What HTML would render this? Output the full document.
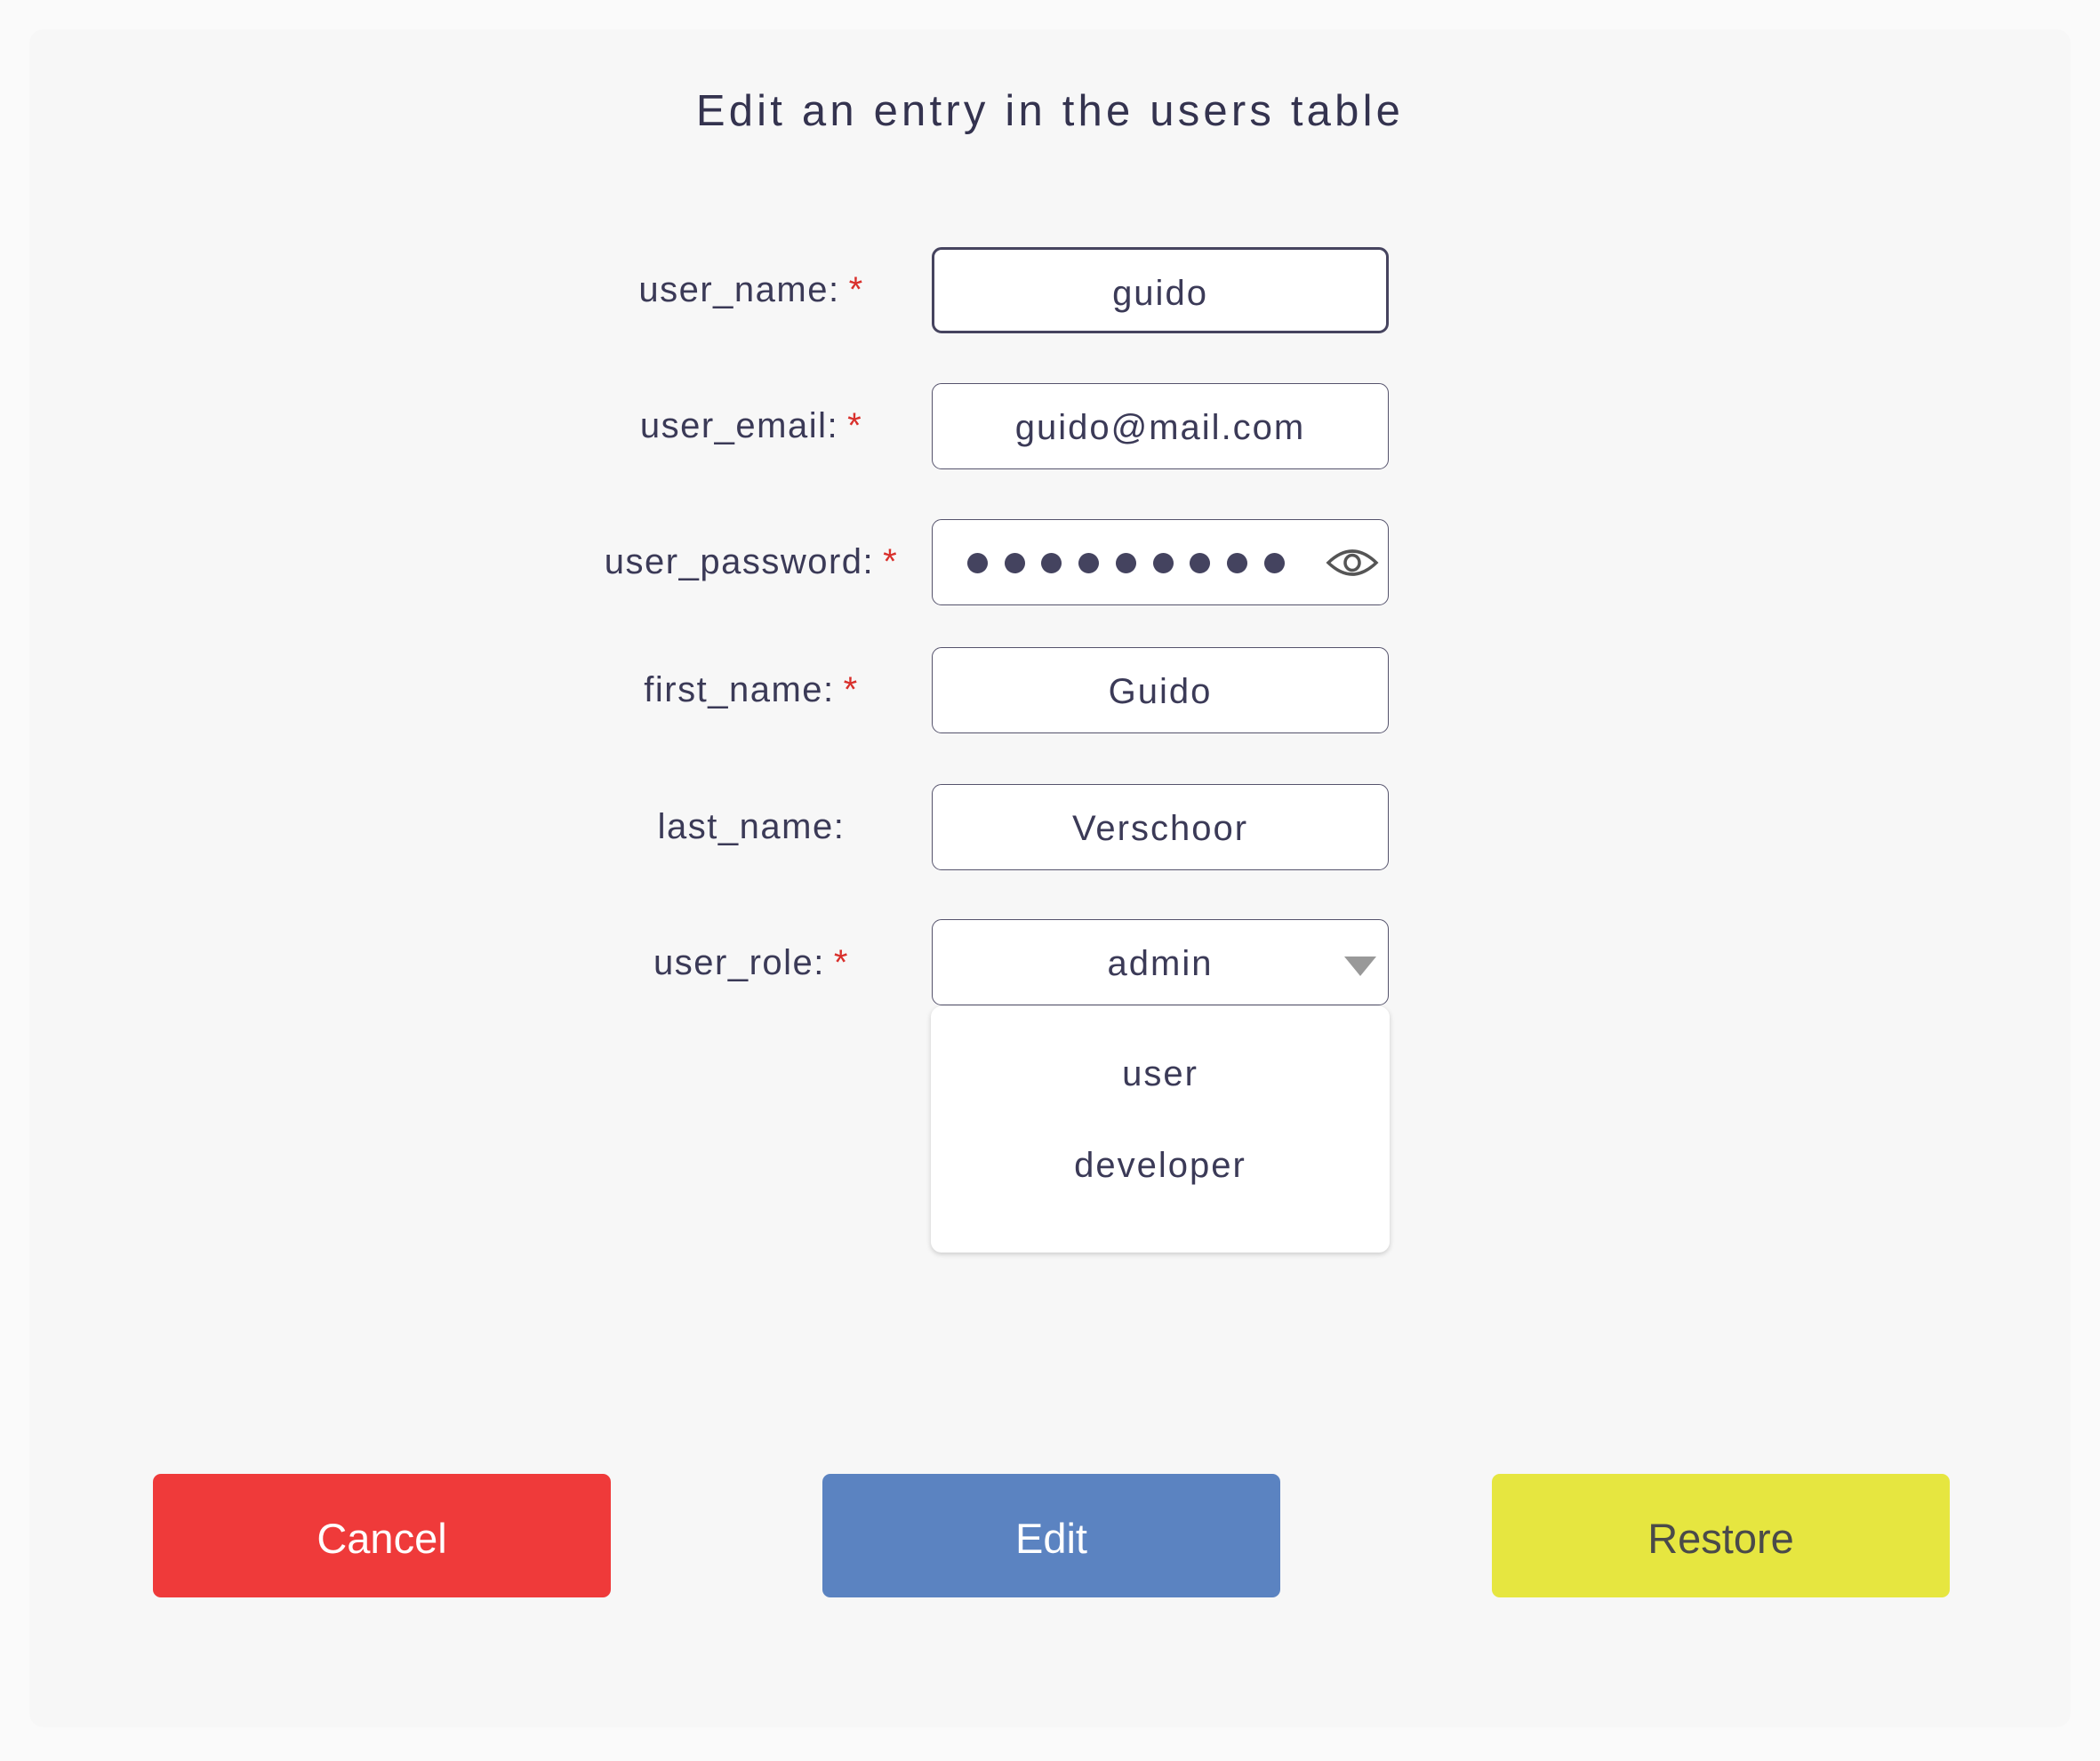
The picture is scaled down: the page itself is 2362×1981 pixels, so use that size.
<!DOCTYPE html>
<html><head><meta charset="utf-8"><style>
body{margin:0;width:2362px;height:1981px;background:#fafafa;position:relative;overflow:hidden;font-family:"Liberation Sans",Arial,sans-serif;color:#3b3a57}
.card{position:absolute;left:33px;top:33px;width:2296px;height:1910px;background:#f7f7f7;border-radius:16px}
.title{position:absolute;left:0;width:2362px;top:97px;text-align:center;font-size:49px;letter-spacing:4.2px;color:#34334f}
.lbl{position:absolute;width:500px;left:595px;text-align:center;font-size:40px;letter-spacing:1.5px;color:#3b3a57}
.lbl b{color:#d9302c;font-weight:normal;margin-left:10px}
.in{position:absolute;left:1048px;width:514px;height:97px;border:1.5px solid #55536c;border-radius:11px;background:#fff;box-sizing:border-box;text-align:center;font-size:40px;letter-spacing:2px;line-height:99px;color:#3b3a57}
.dot{position:absolute;top:37px;width:23px;height:23px;border-radius:50%;background:#44435f}
.menu{position:absolute;left:1047px;top:1132px;width:516px;height:277px;background:#fff;border-radius:12px;box-shadow:0 2px 6px rgba(0,0,0,.18)}
.opt{position:absolute;width:100%;text-align:center;font-size:40px;letter-spacing:2px;color:#3b3a57}
.btn{position:absolute;top:1658px;width:515px;height:139px;border-radius:9px;text-align:center;line-height:146px;font-size:47px;color:#fff}
</style></head><body>
<div class="card"></div>
<div class="title">Edit an entry in the users table</div>

<div class="lbl" style="top:304px">user_name:<b>*</b></div>
<div class="in" style="top:278px;border:3px solid #46445f">guido</div>

<div class="lbl" style="top:457px">user_email:<b>*</b></div>
<div class="in" style="top:431px">guido@mail.com</div>

<div class="lbl" style="top:610px">user_password:<b>*</b></div>
<div class="in" style="top:584px">
<div class="dot" style="left:39px"></div><div class="dot" style="left:81px"></div><div class="dot" style="left:122px"></div><div class="dot" style="left:164px"></div><div class="dot" style="left:206px"></div><div class="dot" style="left:248px"></div><div class="dot" style="left:289px"></div><div class="dot" style="left:331px"></div><div class="dot" style="left:373px"></div>
<svg style="position:absolute;left:442px;top:30px" width="60" height="36" viewBox="0 0 60 36"><path d="M3 18 Q30 -8 57 18 Q30 44 3 18 Z" fill="none" stroke="#555" stroke-width="3.5"/><ellipse cx="30" cy="18" rx="8" ry="8.5" fill="none" stroke="#555" stroke-width="3.5"/></svg>
</div>

<div class="lbl" style="top:754px">first_name:<b>*</b></div>
<div class="in" style="top:728px">Guido</div>

<div class="lbl" style="top:908px">last_name:</div>
<div class="in" style="top:882px">Verschoor</div>

<div class="lbl" style="top:1061px">user_role:<b>*</b></div>
<div class="in" style="top:1034px">admin
<svg style="position:absolute;left:463px;top:41px" width="36" height="24"><path d="M0 0 L36 0 L18 22 Z" fill="#999"/></svg>
</div>

<div class="menu">
<div class="opt" style="top:54px">user</div>
<div class="opt" style="top:157px">developer</div>
</div>

<div class="btn" style="left:172px;background:#ef3a3a">Cancel</div>
<div class="btn" style="left:925px;background:#5b83c1">Edit</div>
<div class="btn" style="left:1678px;background:#e6e640;color:#4a4a4a">Restore</div>
</body></html>
